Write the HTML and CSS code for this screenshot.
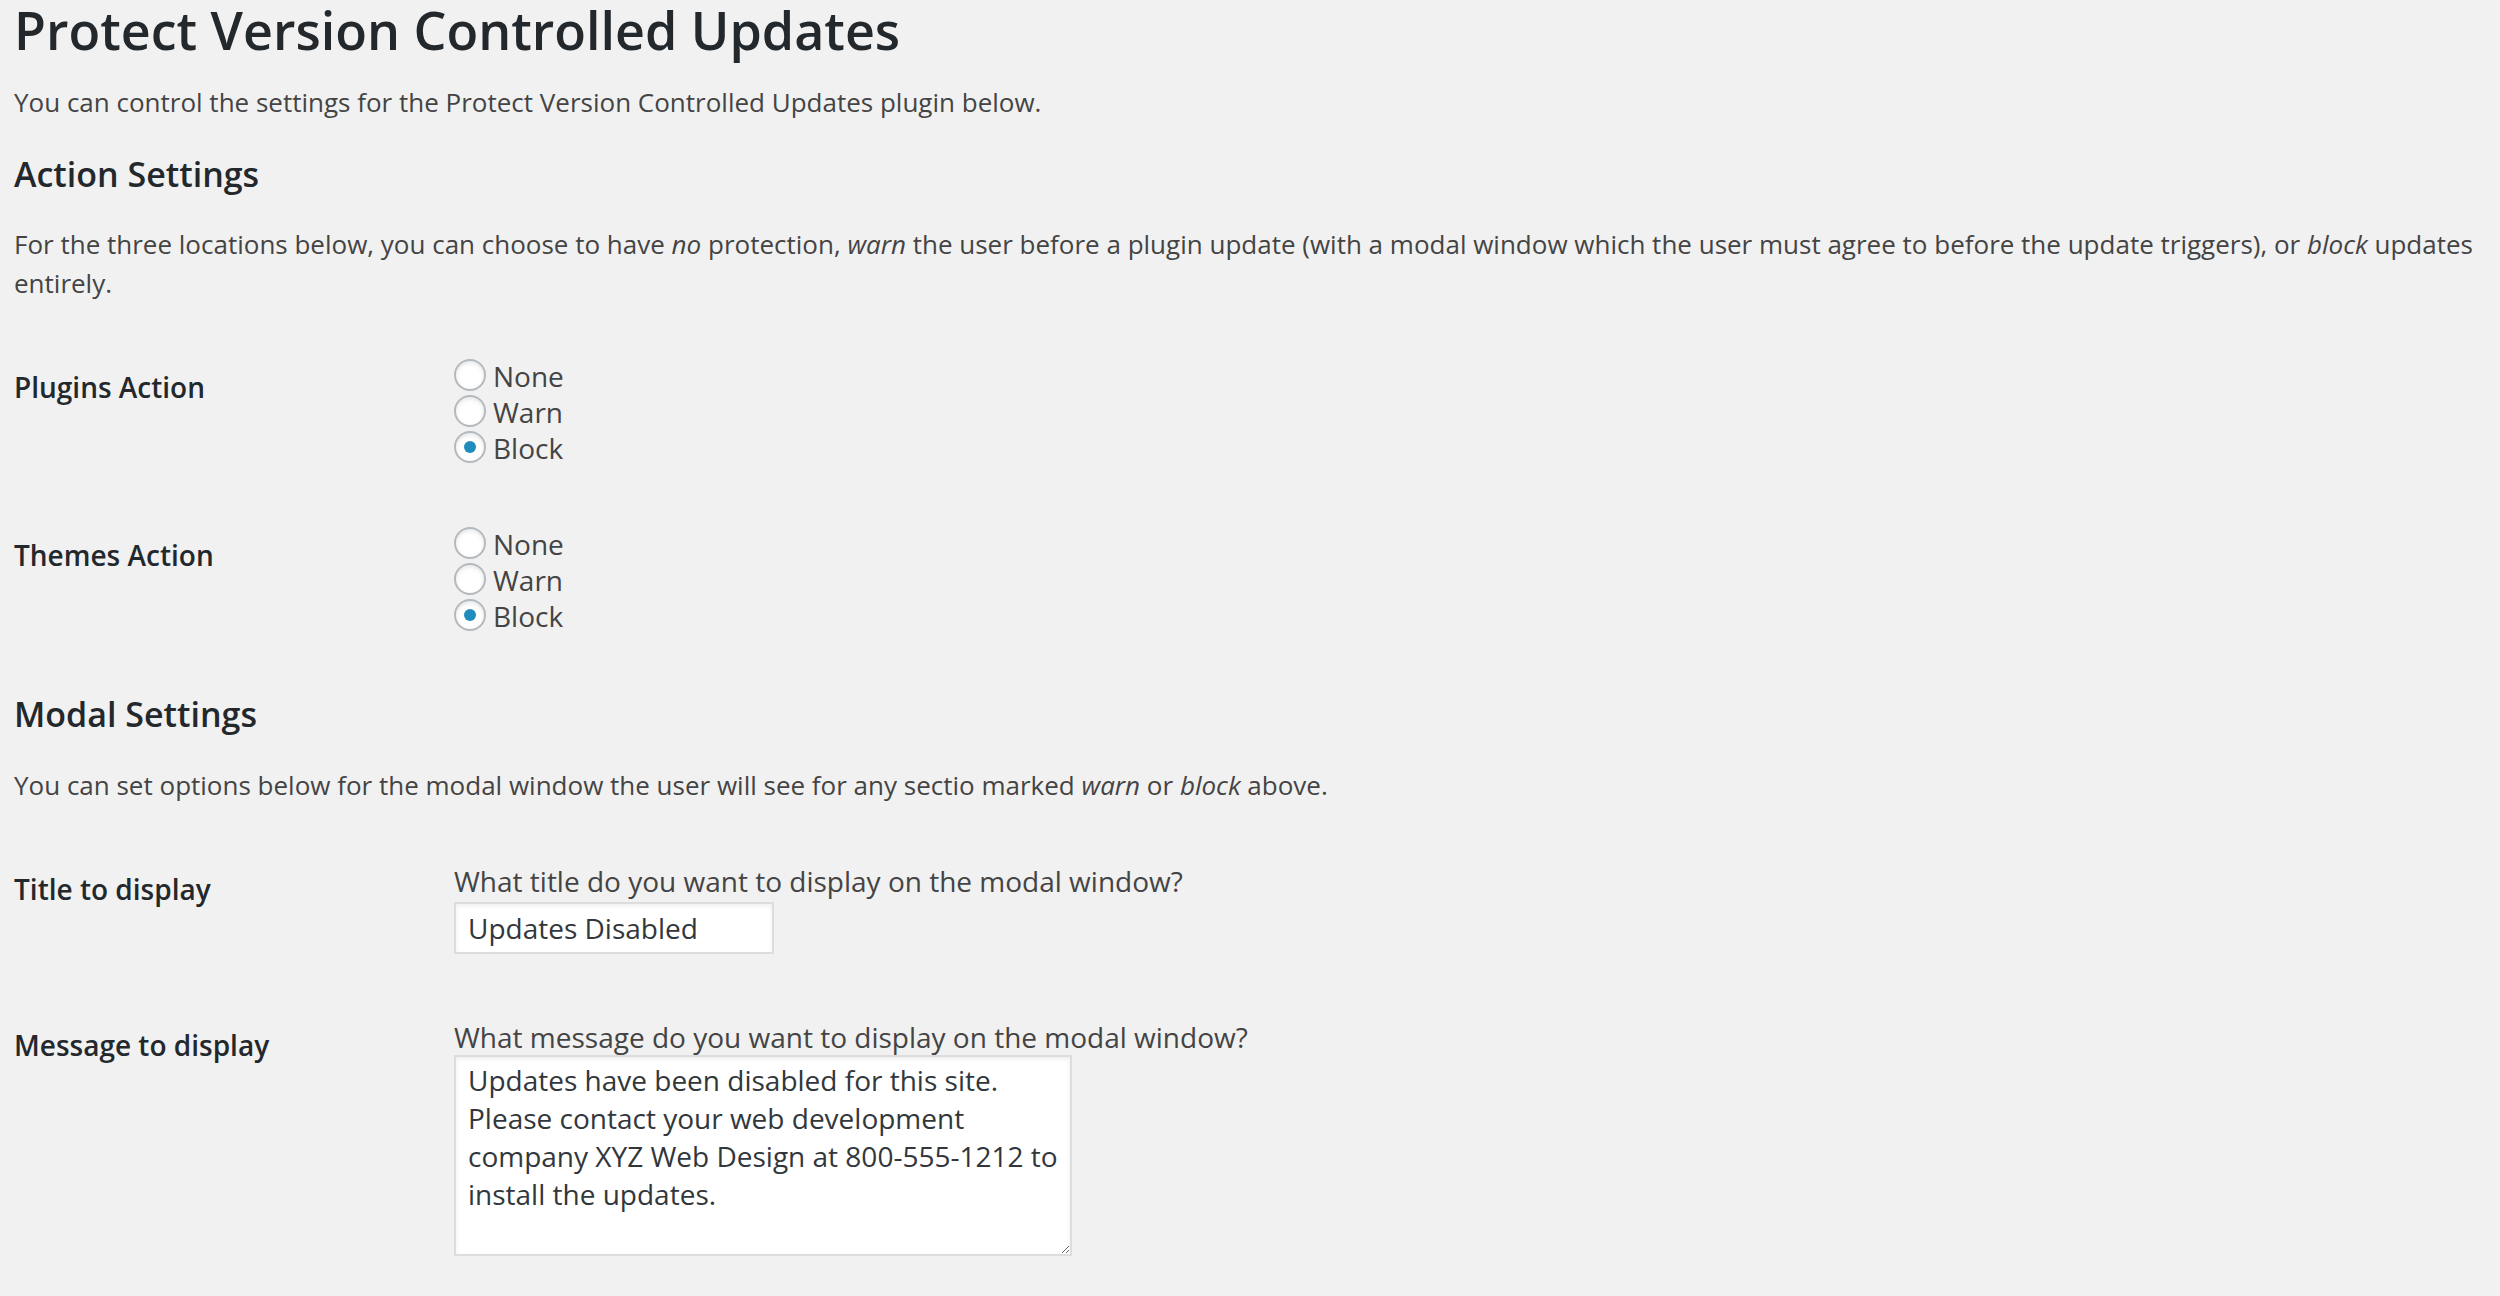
FILE: index.html
```html
<!DOCTYPE html>
<html lang="en">
<head>
<meta charset="utf-8">
<title>Protect Version Controlled Updates</title>
<link rel="stylesheet" href="styles.css">
</head>
<body>
<div class="wrap">
  <h1 class="page-title">Protect Version Controlled Updates</h1>
  <p class="intro">You can control the settings for the Protect Version Controlled Updates plugin below.</p>

  <h2 class="section-title">Action Settings</h2>
  <p class="section-desc">For the three locations below, you can choose to have <em>no</em> protection, <em>warn</em> the user before a plugin update (with a modal window which the user must agree to before the update triggers), or <em>block</em> updates entirely.</p>

  <div class="settings">
    <div class="setting-row">
      <div class="setting-label">Plugins Action</div>
      <div class="setting-field radio-field">
        <label class="radio-option"><input type="radio" name="plugins" class="radio"> None</label>
        <label class="radio-option"><input type="radio" name="plugins" class="radio"> Warn</label>
        <label class="radio-option"><input type="radio" name="plugins" class="radio" checked> Block</label>
      </div>
    </div>
    <div class="setting-row">
      <div class="setting-label">Themes Action</div>
      <div class="setting-field radio-field">
        <label class="radio-option"><input type="radio" name="themes" class="radio"> None</label>
        <label class="radio-option"><input type="radio" name="themes" class="radio"> Warn</label>
        <label class="radio-option"><input type="radio" name="themes" class="radio" checked> Block</label>
      </div>
    </div>
  </div>

  <h2 class="section-title section-after-table">Modal Settings</h2>
  <p class="section-desc section-desc-modal">You can set options below for the modal window the user will see for any sectio marked <em>warn</em> or <em>block</em> above.</p>

  <div class="settings">
    <div class="setting-row">
      <div class="setting-label">Title to display</div>
      <div class="setting-field text-field">
        <label class="field-caption" for="modal-title">What title do you want to display on the modal window?</label>
        <input id="modal-title" class="text-input" type="text" value="Updates Disabled">
      </div>
    </div>
    <div class="setting-row">
      <div class="setting-label">Message to display</div>
      <div class="setting-field text-field">
        <label class="field-caption" for="modal-message">What message do you want to display on the modal window?</label>
        <textarea id="modal-message" class="text-area">Updates have been disabled for this site. Please contact your web development company XYZ Web Design at 800-555-1212 to install the updates.</textarea>
      </div>
    </div>
  </div>
</div>
</body>
</html>
```

FILE: styles.css
```css
* {
  box-sizing: border-box;
}

html,
body {
  margin: 0;
  background: #f1f1f1;
}

body {
  color: #444;
  font-family: "Open Sans", "Liberation Sans", sans-serif;
}

.wrap {
  padding: 0 14px;
}

.page-title {
  margin: 0;
  font-size: 52px;
  line-height: 60px;
  font-weight: 600;
  color: #23282d;
}

.intro {
  margin: 23px 0 0;
  font-size: 26px;
  line-height: 39px;
}

.section-title {
  margin: 34px 0 0;
  font-size: 34px;
  line-height: 36px;
  font-weight: 600;
  color: #23282d;
}

.section-after-table {
  margin-top: 32px;
}

.section-desc {
  margin: 33px 0 0;
  font-size: 26px;
  line-height: 39px;
}

.section-desc-modal {
  margin-top: 34px;
}

.section-desc em {
  font-style: italic;
}

.settings {
  margin-top: 25px;
}

.setting-row {
  display: grid;
  grid-template-columns: 420px 1fr;
}

.setting-label {
  padding: 41px 20px 40px 0;
  font-size: 28px;
  line-height: 36px;
  font-weight: 600;
  color: #23282d;
}

.setting-field {
  padding: 30px 20px;
  font-size: 28px;
  line-height: 36px;
}

.radio-field {
  display: flex;
  flex-direction: column;
}

.radio-option {
  display: flex;
  align-items: center;
  height: 36px;
  color: #444;
}

.radio {
  appearance: none;
  -webkit-appearance: none;
  position: relative;
  width: 32px;
  height: 32px;
  margin: -2px 7px 0 0;
  border: 2px solid #b4b9be;
  border-radius: 50%;
  background: #fff;
  box-shadow: inset 0 2px 4px rgba(0, 0, 0, 0.1);
  flex: none;
}

.radio:checked::before {
  content: "";
  position: absolute;
  left: 8px;
  top: 8px;
  width: 12px;
  height: 12px;
  border-radius: 50%;
  background: #1e8cbe;
}

.text-field {
  display: flex;
  flex-direction: column;
  align-items: flex-start;
  padding: 33px 20px 32px;
}

.field-caption {
  display: block;
  height: 36px;
  color: #444;
}

.text-input {
  width: 320px;
  height: 52px;
  margin: 3px 0 0;
  padding: 0 12px;
  border: 2px solid #ddd;
  background: #fff;
  box-shadow: inset 0 2px 4px rgba(0, 0, 0, 0.07);
  color: #32373c;
  font-family: "Open Sans", "Liberation Sans", sans-serif;
  font-size: 28px;
  outline: none;
}

.text-area {
  width: 618px;
  height: 201px;
  margin: 0;
  padding: 4px 6px 4px 12px;
  border: 2px solid #ddd;
  background: #fff;
  box-shadow: inset 0 2px 4px rgba(0, 0, 0, 0.07);
  color: #32373c;
  font-family: "Open Sans", "Liberation Sans", sans-serif;
  font-size: 28px;
  line-height: 38px;
  outline: none;
}
```
